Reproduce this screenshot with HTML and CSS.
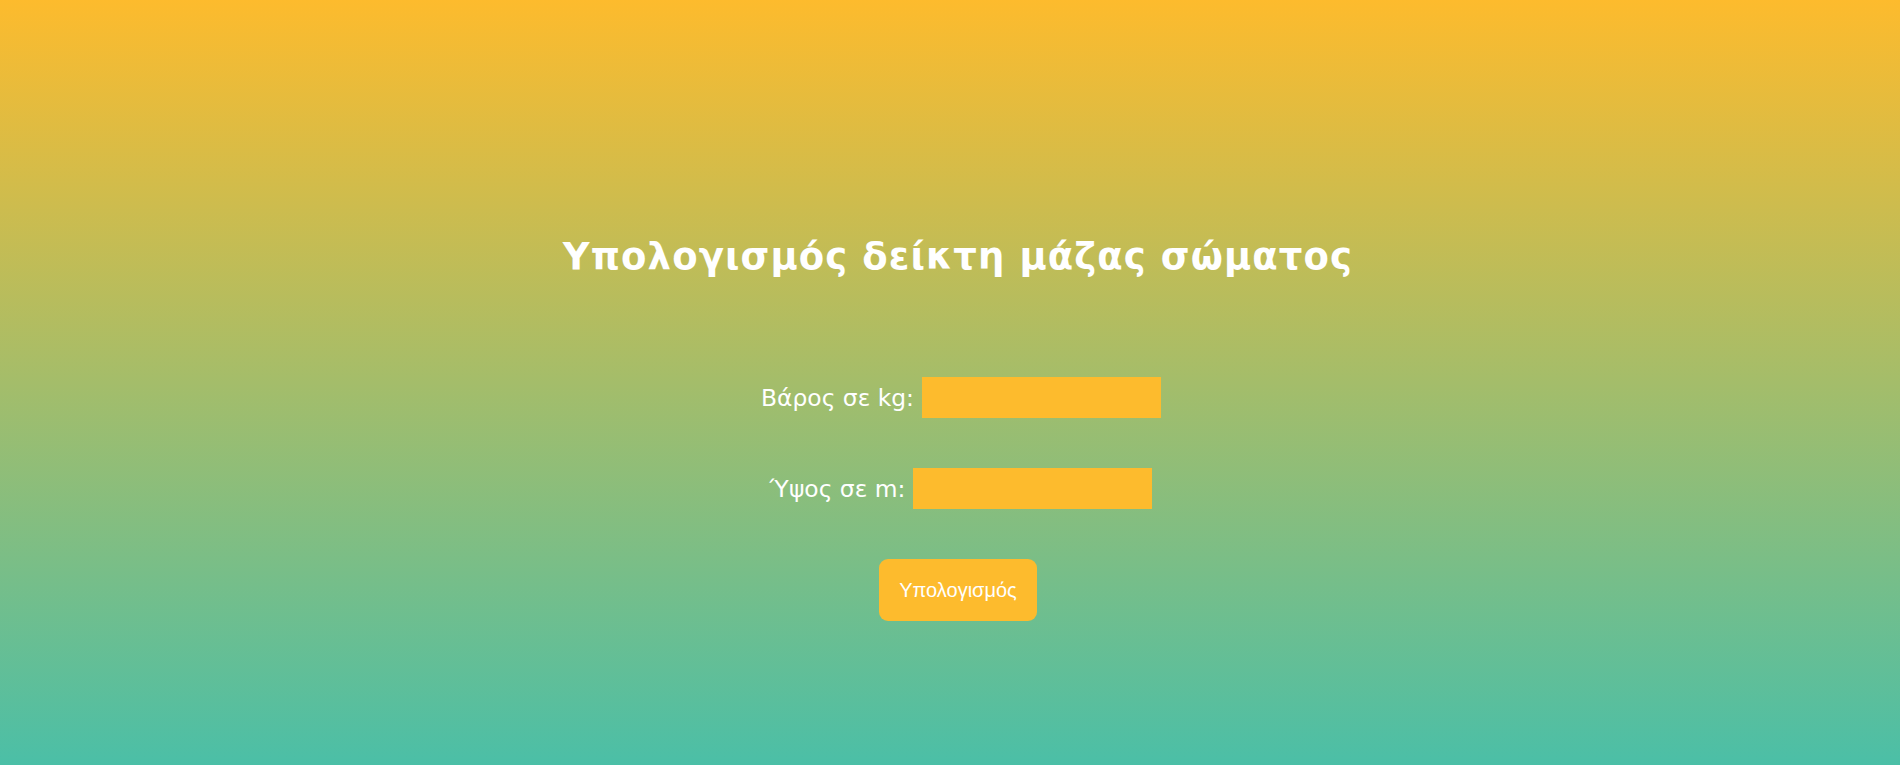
FILE: index.html
```html
<!DOCTYPE html>
<html lang="el">
<head>
<meta charset="utf-8">
<title>BMI</title>
<link rel="stylesheet" href="styles.css">
</head>
<body>
<main class="page">
  <h1 class="title">Υπολογισμός δείκτη μάζας σώματος</h1>
  <form class="form">
    <div class="row"><label class="label" for="w">Βάρος σε kg:</label><input class="field" id="w" type="text"></div>
    <div class="row"><label class="label" for="h">Ύψος σε m:</label><input class="field" id="h" type="text"></div>
    <button class="btn" type="button">Υπολογισμός</button>
  </form>
</main>
</body>
</html>
```
FILE: styles.css
```css
html, body { margin: 0; padding: 0; height: 100%; }
body {
  background: linear-gradient(to bottom, #fdbb2d 0%, #4bbfa7 100%);
  font-family: "DejaVu Sans", Verdana, sans-serif;
  color: #fff;
}
.page {
  display: flex;
  flex-direction: column;
  align-items: center;
  padding-top: 227px;
  padding-left: 16px;
}
.title {
  margin: 0;
  font-size: 37px;
  letter-spacing: 1.1px;
  font-weight: bold;
  line-height: 60px;
}
.form {
  display: flex;
  flex-direction: column;
  align-items: center;
  margin-top: 90px;
}
.row {
  display: flex;
  align-items: center;
  gap: 8px;
  margin-bottom: 50px;
  height: 41px;
  padding-left: 6px;
}
.label { font-size: 23.4px; }
.field {
  width: 239px;
  height: 41px;
  box-sizing: border-box;
  border: none;
  background: #fdbb2d;
  padding: 0 8px;
}
.btn {
  width: 158px;
  height: 62px;
  border: none;
  border-radius: 9px;
  background: #fdbb2d;
  color: #fff;
  font-family: "Liberation Sans", Arial, sans-serif;
  font-size: 20px;
}
```
